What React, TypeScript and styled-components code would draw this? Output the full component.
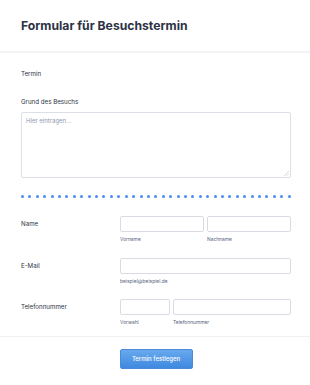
import React from "react";
import styled, { createGlobalStyle } from "styled-components";

const GlobalStyle = createGlobalStyle`
  html, body { margin: 0; padding: 0; background: #ffffff; }
  body { font-family: Inter, "Noto Sans", Roboto, sans-serif; color: #2c3345; }
  * { box-sizing: border-box; }
`;

const Page = styled.div`
  width: 310px;
  display: flex;
  flex-direction: column;
`;

const Header = styled.header`
  height: 53px;
  padding: 0 21px;
  display: flex;
  align-items: center;
  border-bottom: 2px solid #f3f3f6;
`;

const Title = styled.h1`
  margin: 0;
  font-size: 12.2px;
  font-weight: 700;
  color: #2c3345;
`;

const Body = styled.div`
  padding: 17px 19px 0 21px;
  display: flex;
  flex-direction: column;
`;

const Label = styled.div<{ $mb?: number }>`
  font-size: 6.2px;
  line-height: 8px;
  color: #2c3345;
  margin-bottom: ${(p) => p.$mb ?? 0}px;
`;

const AreaWrap = styled.div`
  position: relative;
  width: 270px;
  height: 66px;
`;

const TextArea = styled.textarea`
  display: block;
  width: 100%;
  height: 100%;
  margin: 0;
  padding: 4px 4px;
  border: 1px solid #dcdfe6;
  border-radius: 2px;
  resize: none;
  font-family: inherit;
  font-size: 6px;
  color: #2c3345;
  &::placeholder { color: #8f9ab0; }
`;

const Grip = styled.svg`
  position: absolute;
  right: 2px;
  bottom: 2px;
  width: 5px;
  height: 5px;
  pointer-events: none;
`;

const Dots = styled.div`
  margin-top: 17px;
  display: flex;
  justify-content: space-between;
  height: 3px;
`;

const Dot = styled.span`
  width: 3px;
  height: 3px;
  border-radius: 50%;
  background: #4b8bf4;
`;

const Rows = styled.div`
  margin-top: 18px;
  display: flex;
  flex-direction: column;
  gap: 14.5px;
`;

const Row = styled.div`
  display: grid;
  grid-template-columns: 99px 1fr;
  align-items: start;
`;

const RowLabel = styled.div`
  font-size: 6.2px;
  line-height: 16px;
  color: #2c3345;
`;

const Fields = styled.div<{ $cols: string }>`
  display: grid;
  grid-template-columns: ${(p) => p.$cols};
  column-gap: 3px;
`;

const Field = styled.div`
  display: flex;
  flex-direction: column;
`;

const Input = styled.input`
  display: block;
  width: 100%;
  height: 16px;
  margin: 0;
  padding: 0 4px;
  border: 1px solid #d9dce4;
  border-radius: 2px;
  font-family: inherit;
  font-size: 6px;
`;

const SubLabel = styled.div`
  margin-top: 4px;
  font-size: 4.9px;
  line-height: 7px;
  color: #57647e;
`;

const Footer = styled.div`
  margin-top: 9.5px;
  border-top: 1px solid #f1f1f4;
  padding: 12px 19px 0 21px;
  display: flex;
  justify-content: center;
`;

const Button = styled.button`
  width: 73px;
  height: 20px;
  padding: 0;
  border: 1px solid #4a8ad8;
  border-radius: 2px;
  background: linear-gradient(180deg, #68a9ee 0%, #3f89df 100%);
  color: #ffffff;
  font-family: inherit;
  font-size: 6px;
  font-weight: 500;
  cursor: pointer;
`;

export default function App() {
  return (
    <Page>
      <GlobalStyle />
      <Header>
        <Title>Formular für Besuchstermin</Title>
      </Header>
      <Body>
        <Label $mb={20}>Termin</Label>
        <Label $mb={6}>Grund des Besuchs</Label>
        <AreaWrap>
          <TextArea placeholder="Hier eintragen..." />
          <Grip viewBox="0 0 5 5">
            <path d="M5 0 L0 5 M5 2.5 L2.5 5" stroke="#c4c8d0" strokeWidth="0.7" />
          </Grip>
        </AreaWrap>
        <Dots>
          {Array.from({ length: 37 }).map((_, i) => (
            <Dot key={i} />
          ))}
        </Dots>
        <Rows>
          <Row>
            <RowLabel>Name</RowLabel>
            <Fields $cols="1fr 1fr">
              <Field>
                <Input />
                <SubLabel>Vorname</SubLabel>
              </Field>
              <Field>
                <Input />
                <SubLabel>Nachname</SubLabel>
              </Field>
            </Fields>
          </Row>
          <Row>
            <RowLabel>E-Mail</RowLabel>
            <Fields $cols="1fr">
              <Field>
                <Input />
                <SubLabel>beispiel@beispiel.de</SubLabel>
              </Field>
            </Fields>
          </Row>
          <Row>
            <RowLabel>Telefonnummer</RowLabel>
            <Fields $cols="50px 1fr">
              <Field>
                <Input />
                <SubLabel>Vorwahl</SubLabel>
              </Field>
              <Field>
                <Input />
                <SubLabel>Telefonnummer</SubLabel>
              </Field>
            </Fields>
          </Row>
        </Rows>
      </Body>
      <Footer>
        <Button>Termin festlegen</Button>
      </Footer>
    </Page>
  );
}
